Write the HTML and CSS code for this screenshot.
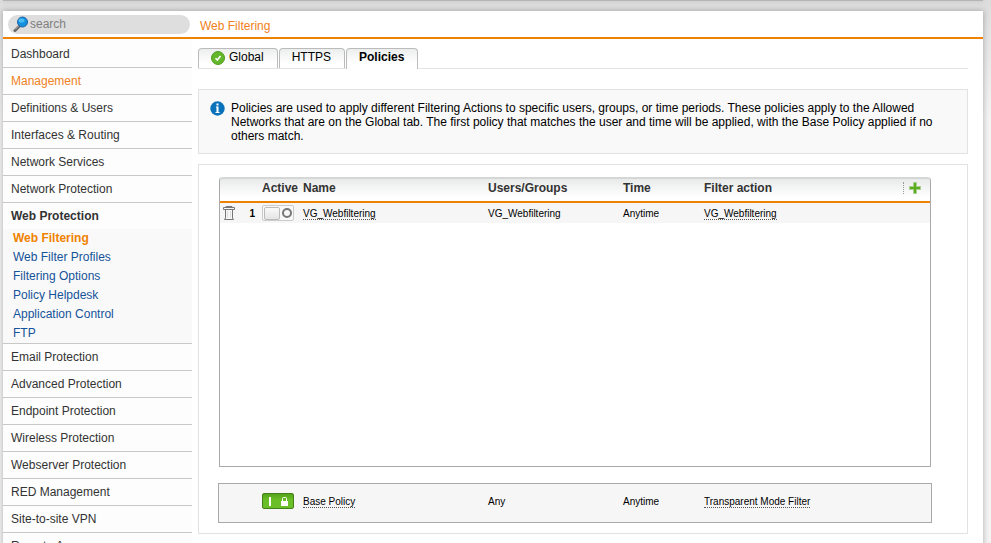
FILE: index.html
```html
<!DOCTYPE html>
<html lang="en">
<head>
  <meta charset="UTF-8">
  <meta name="viewport" content="width=device-width, initial-scale=1.0">
  <title>Web Filtering</title>
  <link rel="stylesheet" href="styles.css">
</head>
<body>
  <div class="topbar"></div>

  <div class="page">
    <header class="header">
      <form class="search">
        <svg class="search-icon" width="16" height="16" viewBox="0 0 16 16">
          <path d="M2 14.5L6.5 10" stroke="#666" stroke-width="3" stroke-linecap="round"/>
          <path d="M2 13.5L6 9.5" stroke="#bbb" stroke-width="1"/>
          <circle cx="9.5" cy="6" r="5" fill="#1590dc" stroke="#1b62a5"/>
          <ellipse cx="8.5" cy="4.5" rx="3" ry="2" fill="#4bbdf5"/>
        </svg>
        <input type="text" class="search-input" placeholder="search" aria-label="search">
      </form>
      <h1 class="title">Web Filtering</h1>
    </header>

    <div class="main">
      <nav class="sidebar">
        <ul class="menu">
          <li><a href="#">Dashboard</a></li>
          <li><a href="#" class="hot">Management</a></li>
          <li><a href="#">Definitions &amp; Users</a></li>
          <li><a href="#">Interfaces &amp; Routing</a></li>
          <li><a href="#">Network Services</a></li>
          <li><a href="#">Network Protection</a></li>
          <li>
            <a href="#" class="open">Web Protection</a>
            <ul class="submenu">
              <li><a href="#" class="current">Web Filtering</a></li>
              <li><a href="#">Web Filter Profiles</a></li>
              <li><a href="#">Filtering Options</a></li>
              <li><a href="#">Policy Helpdesk</a></li>
              <li><a href="#">Application Control</a></li>
              <li><a href="#">FTP</a></li>
            </ul>
          </li>
          <li><a href="#">Email Protection</a></li>
          <li><a href="#">Advanced Protection</a></li>
          <li><a href="#">Endpoint Protection</a></li>
          <li><a href="#">Wireless Protection</a></li>
          <li><a href="#">Webserver Protection</a></li>
          <li><a href="#">RED Management</a></li>
          <li><a href="#">Site-to-site VPN</a></li>
          <li><a href="#">Remote Access</a></li>
        </ul>
      </nav>

      <main class="content">
        <div class="tabs">
          <button type="button" class="tab">
            <svg width="14" height="14" viewBox="0 0 14 14">
              <circle cx="7" cy="7" r="6.5" fill="#62b72a" stroke="#4e9d22"/>
              <path d="M4.5 7.2L6.3 9L9.5 5" fill="none" stroke="#fff" stroke-width="1.6"/>
            </svg>
            Global
          </button>
          <button type="button" class="tab">HTTPS</button>
          <button type="button" class="tab active">Policies</button>
        </div>

        <div class="info">
          <svg width="15" height="15" viewBox="0 0 15 15">
            <circle cx="7.5" cy="7.5" r="7.2" fill="#0a72bb"/>
            <rect x="6.5" y="2.5" width="2" height="2" fill="#fff"/>
            <path d="M6 5.5H8.5V11H9.5V12H5.5V11H6.5V6.5H6Z" fill="#fff"/>
          </svg>
          <p>Policies are used to apply different Filtering Actions to specific users, groups, or time periods. These policies apply to the Allowed Networks that are on the Global tab. The first policy that matches the user and time will be applied, with the Base Policy applied if no others match.</p>
        </div>

        <section class="panel">
          <div class="policies">
            <table class="policy-table">
              <colgroup>
                <col class="col-del"><col class="col-num"><col class="col-active"><col class="col-name">
                <col class="col-users"><col class="col-time"><col class="col-action"><col class="col-add">
              </colgroup>
              <thead>
                <tr>
                  <th></th>
                  <th></th>
                  <th>Active</th>
                  <th>Name</th>
                  <th>Users/Groups</th>
                  <th>Time</th>
                  <th>Filter action</th>
                  <th>
                    <button type="button" class="add" aria-label="Add policy">
                      <svg width="12" height="12" viewBox="0 0 12 12">
                        <path d="M4.5 .5H7.5V4.5H11.5V7.5H7.5V11.5H4.5V7.5H.5V4.5H4.5Z" fill="#5aad1e" stroke="#a9cf90"/>
                      </svg>
                    </button>
                  </th>
                </tr>
              </thead>
              <tbody>
                <tr>
                  <td>
                    <button type="button" class="delete" aria-label="Delete policy">
                      <svg width="12" height="15" viewBox="0 0 12 15" fill="none" stroke="#777">
                        <path d="M3 1.5V.5H9V1.5M.5 1.5H11.5V3.5H.5Z"/>
                        <path d="M2.5 3.5V12L1.5 13.5H10.5L9.5 12V3.5"/>
                        <path d="M4.5 5V11.5M7.5 5V11.5" stroke="#ddd"/>
                      </svg>
                    </button>
                  </td>
                  <td class="num">1</td>
                  <td>
                    <button type="button" class="toggle" aria-label="Enable policy">
                      <span class="knob"></span>
                      <span class="ring"></span>
                    </button>
                  </td>
                  <td><a href="#" class="edit">VG_Webfiltering</a></td>
                  <td>VG_Webfiltering</td>
                  <td>Anytime</td>
                  <td><a href="#" class="edit">VG_Webfiltering</a></td>
                  <td></td>
                </tr>
              </tbody>
            </table>
          </div>

          <div class="base-policy">
            <table class="policy-table">
              <colgroup>
                <col class="col-del"><col class="col-num"><col class="col-active"><col class="col-name">
                <col class="col-users"><col class="col-time"><col class="col-action"><col class="col-add">
              </colgroup>
              <tbody>
                <tr>
                  <td></td>
                  <td></td>
                  <td>
                    <button type="button" class="toggle on" aria-label="Base policy is always on" disabled>
                      <svg width="30" height="14" viewBox="0 0 30 14">
                        <rect x="6" y="3" width="2" height="9" fill="#fff"/>
                        <rect x="18" y="7" width="7" height="5" fill="#fff"/>
                        <path d="M19.5 7V4.5Q19.5 3.5 20.5 3.5H22.5Q23.5 3.5 23.5 4.5V7" fill="none" stroke="#fff"/>
                      </svg>
                    </button>
                  </td>
                  <td><a href="#" class="edit">Base Policy</a></td>
                  <td>Any</td>
                  <td>Anytime</td>
                  <td><a href="#" class="edit">Transparent Mode Filter</a></td>
                  <td></td>
                </tr>
              </tbody>
            </table>
          </div>
        </section>
      </main>
    </div>
  </div>
</body>
</html>
```

FILE: styles.css
```css
* {
  box-sizing: border-box;
}

body {
  margin: 0;
  padding: 0 8px 0 3px;
  font-family: Arial, "Liberation Sans", sans-serif;
  font-size: 12px;
  color: #000;
  background: linear-gradient(#dcdcdc, #e4e4e4 30px, #f4f4f4 120px);
}

ul {
  margin: 0;
  padding: 0;
  list-style: none;
}

a {
  text-decoration: none;
}

button {
  font: inherit;
  color: inherit;
}

svg {
  display: block;
}

.topbar {
  height: 1px;
  margin-bottom: 10px;
  background: #b5b5b5;
  box-shadow: 0 0 4px rgba(0, 0, 0, 0.25);
}

.page {
  background: #fff;
  box-shadow: 0 0 6px rgba(0, 0, 0, 0.3);
}

/* header */
.header {
  display: flex;
  align-items: center;
  height: 28px;
  padding-left: 5px;
  border-bottom: 2px solid #ef8200;
}

.search {
  display: flex;
  align-items: center;
  width: 182px;
  height: 19px;
  padding-left: 5px;
  background: #dedede;
  border-radius: 10px;
}

.search-input {
  width: 150px;
  padding: 0;
  margin-left: 1px;
  border: 0;
  outline: 0;
  background: none;
  font: inherit;
}

.search-input::placeholder {
  color: #808080;
}

.title {
  margin: 3px 0 0 10px;
  font-size: 12px;
  font-weight: normal;
  color: #f08122;
}

.main {
  display: flex;
}

/* sidebar */
.sidebar {
  flex: none;
  width: 189px;
  padding-top: 2px;
  background: #fdfdfd;
}

.menu > li {
  border-bottom: 1px solid #c8c8c8;
}

.menu > li > a {
  display: block;
  padding-left: 8px;
  line-height: 26px;
  color: #333;
}

.menu > li > .hot {
  color: #f08122;
}

.menu > li > .open {
  font-weight: bold;
}

.submenu {
  background: #f9f9f9;
}

.submenu a {
  display: block;
  padding-left: 10px;
  line-height: 19px;
  color: #15539a;
}

.submenu .current {
  font-weight: bold;
  color: #ef8200;
}

/* content */
.content {
  flex: 1;
  padding: 9px 15px 9px 6px;
}

.tabs {
  display: flex;
  gap: 1px;
  border-bottom: 1px solid #e4e4e4;
}

.tab {
  display: flex;
  align-items: center;
  gap: 4px;
  height: 20px;
  padding: 0 13px 3px 12px;
  border: 1px solid #bbb;
  border-bottom: 0;
  border-radius: 4px 4px 0 0;
  background: linear-gradient(#eceeed, #fff 14px);
}

.tab svg {
  margin-top: 2px;
}

.tab.active {
  height: 21px;
  margin-bottom: -1px;
  padding-bottom: 4px;
  font-weight: bold;
}

.info {
  display: flex;
  gap: 6px;
  margin-top: 20px;
  padding: 11px 11px 10px;
  border: 1px solid #e2e2e2;
  background: #f9f9f9;
}

.info svg {
  flex: none;
}

.info p {
  margin: 0;
  line-height: 14px;
}

.panel {
  margin-top: 10px;
  padding: 12px 35px 10px 19px;
  border: 1px solid #e2e2e2;
}

.policies {
  min-height: 290px;
  margin: 0 1px;
  border: 1px solid #a9a9a9;
  border-top: 0;
  border-radius: 4px 4px 0 0;
}

.policy-table {
  width: 100%;
  table-layout: fixed;
  border-collapse: separate;
  border-spacing: 0;
  font-size: 10px;
}

.col-del { width: 20px; }
.col-num { width: 22px; }
.col-active { width: 41px; }
.col-name { width: 185px; }
.col-users { width: 135px; }
.col-time { width: 81px; }
.col-add { width: 27px; }

.policy-table thead {
  background: linear-gradient(#e6e8e7, #fff 20px);
}

.policy-table th {
  height: 26px;
  padding: 0 0 4px;
  border-top: 2px solid #d5d7d6;
  border-bottom: 2px solid #ef8200;
  font-size: 12px;
  text-align: left;
  color: #333;
}

.policy-table th:first-child {
  border-top-left-radius: 4px;
}

.policy-table th:last-child {
  border-top-right-radius: 4px;
}

.policy-table td {
  height: 20px;
  padding: 0;
}

.policies td {
  background: #f6f6f6;
}

.policy-table .num {
  padding-right: 7px;
  font-weight: bold;
  text-align: right;
}

.add,
.delete {
  display: block;
  padding: 0;
  border: 0;
  background: none;
  cursor: pointer;
}

.add {
  padding: 0 5px;
  border-left: 1px dotted #999;
}

.delete {
  margin-left: 3px;
}

.edit {
  color: #000;
  border-bottom: 1px dotted #555;
}

.toggle {
  display: flex;
  align-items: center;
  justify-content: space-between;
  width: 32px;
  height: 16px;
  padding: 0 1px;
  border: 1px solid #ccc;
  border-radius: 2px;
  background: #f8f8f8;
}

.knob {
  width: 16px;
  height: 13px;
  border: 1px solid #bbb;
  border-radius: 2px;
  background: linear-gradient(#fafafa, #e4e4e4);
}

.ring {
  width: 10px;
  height: 10px;
  border: 2px solid #777;
  border-radius: 50%;
}

.toggle.on {
  padding: 0;
  border-color: #438019;
  background: linear-gradient(#57a31f, #6abf28 6px);
}

.base-policy {
  margin-top: 16px;
  padding: 7px 1px 11px;
  border: 1px solid #a9a9a9;
  background: #f6f6f6;
}
```
